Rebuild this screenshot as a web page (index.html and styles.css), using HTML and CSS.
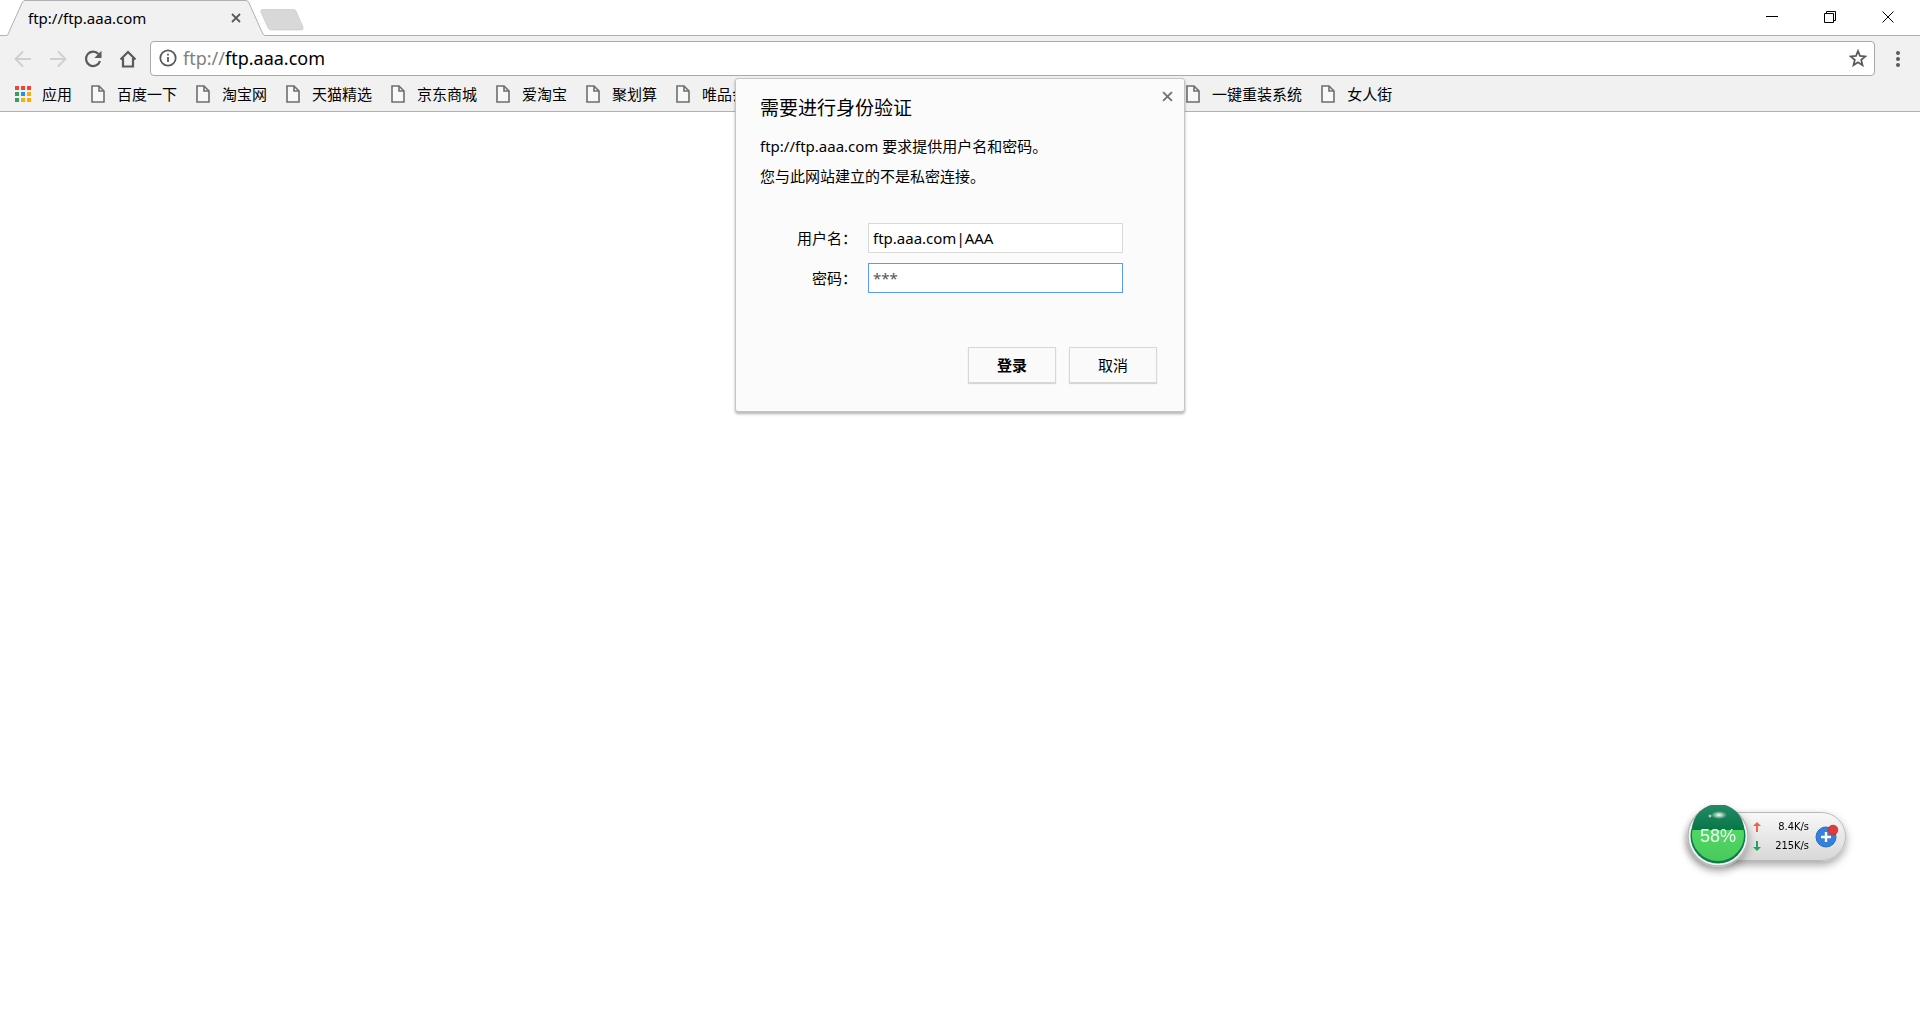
FILE: index.html
```html
<!DOCTYPE html>
<html lang="zh-CN">
<head>
<meta charset="utf-8">
<meta name="viewport" content="width=device-width, initial-scale=1">
<title>ftp://ftp.aaa.com</title>
<link rel="stylesheet" href="styles.css">
</head>
<body>
<svg class="sprite" aria-hidden="true">
  <symbol id="page" viewBox="0 0 14 18"><path d="M1 1h7l5 5v11H1z" fill="#f8f8f8" stroke="#6e6e6e" stroke-width="1.6"/><path d="M8 1v5h5" fill="none" stroke="#6e6e6e" stroke-width="1.6"/></symbol>
  <symbol id="cross" viewBox="0 0 10 10"><path d="M1 1l8 8M9 1l-8 8" fill="none" stroke="currentColor" stroke-width="1.8"/></symbol>
</svg>
<header class="browser">
  <div class="tabstrip">
    <div class="tab">
      <svg class="tab-shape" viewBox="0 0 258 36" aria-hidden="true"><path d="M0 35.5C1 35 1 34 2 32L15 3Q16.300 .5 18 .5H239Q241 .5 242 3L255 32Q256 35 258 35.500V36H0z" fill="#f1f1f1"/><path d="M0 35.500C1 35 1 34 2 32L15 3Q16.300 .5 18 .5H239Q241 .5 242 3L255 32Q256 35 258 35.500" fill="none" stroke="#b0b0b0"/></svg>
      <span class="tab-title">ftp://ftp.aaa.com</span>
      <button class="tab-close" aria-label="关闭标签页"><svg width="10" height="10"><use href="#cross"/></svg></button>
    </div>
    <button class="new-tab" aria-label="新标签页"><svg width="44" height="22" viewBox="0 0 44 22"><path d="M3 .5H33Q35 .5 36 2L43 18Q44 21 41 21H12Q9 21 8 19L1 3Q0 .5 3 .5z" fill="#d8d8d8" stroke="#cacaca" stroke-width=".7"/></svg></button>
    <div class="window-buttons">
      <button aria-label="最小化"><svg width="12" height="12"><path d="M0 5.500h12" stroke="#000"/></svg></button>
      <button aria-label="还原"><svg width="12" height="12"><path d="M.5 2.500h9v9h-9zM2.500 2.500v-2h9v9h-2" fill="none" stroke="#000"/></svg></button>
      <button aria-label="关闭"><svg width="12" height="12"><path d="M.5 .5l11 11M11.500 .5l-11 11" stroke="#000"/></svg></button>
    </div>
  </div>
  <div class="toolbar">
    <nav class="nav">
      <button aria-label="后退" disabled><svg width="18" height="18"><path d="M17 9H2M9 1.500L1.500 9 9 16.500" fill="none" stroke="#cfcfcf" stroke-width="1.900"/></svg></button>
      <button aria-label="前进" disabled><svg width="18" height="18"><path d="M1 9h15M9 1.500L16.500 9 9 16.500" fill="none" stroke="#cfcfcf" stroke-width="1.900"/></svg></button>
      <button aria-label="重新加载"><svg width="18" height="18"><path d="M14.500 4A7.200 7.200 0 1 0 16 11.200" fill="none" stroke="#5a5a5a" stroke-width="2.200"/><path d="M17.500 .8V8h-7.200z" fill="#5a5a5a"/></svg></button>
      <button aria-label="主页"><svg width="18" height="18"><path d="M1.500 9.500L9 2l7.500 7.500M4 8v8.500h10V8" fill="none" stroke="#5a5a5a" stroke-width="2.200"/></svg></button>
    </nav>
    <div class="omnibox">
      <button class="info" aria-label="网站信息"><svg width="18" height="18"><circle cx="9" cy="9" r="7.700" fill="none" stroke="#5a5a5a" stroke-width="1.800"/><path d="M9 8v5M9 4.800v1.800" stroke="#5a5a5a" stroke-width="1.800"/></svg></button>
      <span class="url"><span class="scheme">ftp://</span>ftp.aaa.com</span>
      <button class="star" aria-label="收藏"><svg width="18" height="18"><path d="M9 2l2 5 5.300.4-4.100 3.500 1.300 5.300L9 13.300l-4.500 2.900 1.300-5.300L1.700 7.400 7 7z" fill="none" stroke="#5a5a5a" stroke-width="1.800"/></svg></button>
    </div>
    <button class="menu" aria-label="菜单"><svg width="4" height="18"><path d="M0 3a2 2 0 1 1 4 0a2 2 0 1 1-4 0M0 9a2 2 0 1 1 4 0a2 2 0 1 1-4 0M0 15a2 2 0 1 1 4 0a2 2 0 1 1-4 0" fill="#5a5a5a"/></svg></button>
  </div>
  <nav class="bookmarks">
    <a class="apps" href="#"><svg width="16" height="16"><path d="M0 0h4v4H0zM6 0h4v4H6zM12 0h4v4h-4z" fill="#f44336"/><path d="M0 6h4v4H0zM0 12h4v4H0z" fill="#34a060"/><path d="M6 6h4v4H6z" fill="#2a8cf0"/><path d="M12 6h4v4h-4zM6 12h4v4H6zM12 12h4v4h-4z" fill="#fbab07"/></svg>应用</a>
    <a href="#"><svg width="14" height="18"><use href="#page"/></svg>百度一下</a>
    <a href="#"><svg width="14" height="18"><use href="#page"/></svg>淘宝网</a>
    <a href="#"><svg width="14" height="18"><use href="#page"/></svg>天猫精选</a>
    <a href="#"><svg width="14" height="18"><use href="#page"/></svg>京东商城</a>
    <a href="#"><svg width="14" height="18"><use href="#page"/></svg>爱淘宝</a>
    <a href="#"><svg width="14" height="18"><use href="#page"/></svg>聚划算</a>
    <a class="wide" href="#"><svg width="14" height="18"><use href="#page"/></svg>唯品会</a>
    <a href="#"><svg width="14" height="18"><use href="#page"/></svg>一键重装系统</a>
    <a href="#"><svg width="14" height="18"><use href="#page"/></svg>女人街</a>
  </nav>
</header>

<form class="dialog" role="dialog" aria-labelledby="dialog-title">
  <button type="button" class="dialog-close" aria-label="关闭"><svg width="11" height="11"><use href="#cross"/></svg></button>
  <h1 id="dialog-title">需要进行身份验证</h1>
  <p>ftp://ftp.aaa.com 要求提供用户名和密码。</p>
  <p>您与此网站建立的不是私密连接。</p>
  <div class="fields">
    <label for="user">用户名：</label><input id="user" type="text" value="ftp.aaa.com|AAA">
    <label for="pass">密码：</label><input id="pass" class="active" type="text" value="***" autocomplete="off">
  </div>
  <div class="actions">
    <button type="button" class="primary">登录</button>
    <button type="button">取消</button>
  </div>
</form>

<aside class="monitor">
  <div class="gauge">
    <svg class="gauge-ball" viewBox="0 0 62 62" aria-hidden="true">
      <defs>
        <linearGradient id="dark" x1="0" y1="0" x2="0" y2="1"><stop offset="0" stop-color="#258b68"/><stop offset="1" stop-color="#087647"/></linearGradient>
        <linearGradient id="green" x1="0" y1="0" x2="0" y2="1"><stop offset="0" stop-color="#4fd866"/><stop offset="1" stop-color="#4bc95c"/></linearGradient>
        <radialGradient id="shine"><stop offset="0" stop-color="#fff"/><stop offset="1" stop-color="#fff" stop-opacity="0"/></radialGradient>
      </defs>
      <circle cx="31" cy="31" r="30" fill="#f4f4f4" stroke="#b8b8b8" stroke-width="1.500"/>
      <circle cx="31" cy="31" r="27.500" fill="#0b7d4b"/>
      <path d="M5 25a26 26 0 0 1 52 0z" fill="url(#dark)"/>
      <path d="M5.500 25h51A26 26 0 1 1 5.500 25z" fill="url(#green)"/>
      <ellipse cx="32" cy="10" rx="8" ry="4" fill="url(#shine)"/>
      <circle cx="23" cy="11" r="2" fill="url(#shine)"/>
    </svg>
    <span>58%</span>
  </div>
  <div class="rates">
    <div><svg width="8" height="10"><path d="M4 0l4 4H5v6H3V4H0z" fill="#ef6548"/></svg><span>8.4K/s</span></div>
    <div><svg width="8" height="10"><path d="M4 10L0 6h3V0h2v6h3z" fill="#27a35a"/></svg><span>215K/s</span></div>
  </div>
  <button class="boost" aria-label="加速"><svg width="24" height="24"><circle cx="11" cy="13" r="10" fill="#3580dc" stroke="#266bc4"/><path d="M11 8v10M6 13h10" stroke="#fff" stroke-width="2.400"/><circle cx="18" cy="6" r="4.800" fill="#e03c3c" stroke="#b92b2b" stroke-width=".8"/></svg></button>
</aside>
</body>
</html>
```
FILE: styles.css
```css
* { box-sizing: border-box; }

body {
  margin: 0;
  min-height: 100vh;
  background: #fff;
  color: #000;
  font: 15px/20px "Noto Sans", "Noto Sans CJK SC", sans-serif;
}

button {
  display: flex;
  align-items: center;
  justify-content: center;
  padding: 0;
  border: 0;
  background: none;
  color: inherit;
  font: inherit;
}

svg { display: block; flex: none; }
.sprite { position: absolute; width: 0; height: 0; }

.browser {
  background: #f1f1f1;
  border-bottom: 1px solid #b0b0b0;
}

/* Tab strip */
.tabstrip {
  display: flex;
  height: 36px;
  padding: 0 3px 0 7px;
  background: #fff;
  box-shadow: inset 0 -1px #b0b0b0;
}
.tab {
  position: relative;
  display: flex;
  align-items: center;
  justify-content: space-between;
  width: 258px;
  padding: 0 24px 0 21px;
}
.tab-shape { position: absolute; left: 0; top: 0; width: 258px; height: 36px; }
.tab-title { position: relative; }
.tab-close { position: relative; color: #5a5a5a; }
.new-tab { margin: 4px auto 0 -5px; }
.window-buttons { display: flex; height: 34px; }
.window-buttons button { width: 58px; }

/* Toolbar */
.toolbar {
  display: flex;
  align-items: center;
  gap: 13px;
  padding: 5px 20px 5px 14px;
}
.nav { display: flex; gap: 17px; }
.omnibox {
  display: flex;
  align-items: center;
  flex: 1;
  height: 35px;
  margin-right: 8px;
  padding: 0 7px 2px 8px;
  background: #fff;
  border: 1px solid #a8a8a8;
  border-radius: 4px;
}
.url { flex: 1; margin-left: 6px; font-size: 18px; }
.scheme { color: #808080; }

/* Bookmarks */
.bookmarks {
  display: flex;
  height: 30px;
  padding: 0 14px 4px 15px;
  gap: 19px;
  overflow: hidden;
}
.bookmarks a {
  display: flex;
  align-items: center;
  flex: none;
  gap: 12px;
  color: #000;
  text-decoration: none;
  white-space: nowrap;
}
.bookmarks .apps { gap: 11px; }
.bookmarks .wide { width: 491px; }

/* Sign-in dialog */
.dialog {
  position: absolute;
  top: 78px;
  left: calc(50% - 225px);
  width: 450px;
  padding: 18px 27px 28px 24px;
  background: #fbfbfb;
  border: 1px solid #c4c4c4;
  border-radius: 3px;
  box-shadow: 0 2px 3px rgba(0, 0, 0, .3);
}
.dialog-close { position: absolute; top: 12px; right: 11px; color: #757575; }
.dialog h1 { margin: 0 0 17px; font-size: 19px; line-height: 22px; font-weight: 400; }
.dialog p { margin: 0 0 10px; }
.fields {
  display: grid;
  grid-template-columns: 97px 255px;
  gap: 10px 11px;
  align-items: center;
  padding-top: 27px;
}
.fields label { text-align: right; white-space: nowrap; }
.fields input {
  height: 30px;
  padding: 0 4px;
  border: 1px solid #d9d9d9;
  background: #fff;
  font: inherit;
  color: #000;
  outline: 0;
}
.fields .active { border-color: #5b9bf8; color: #555; }
.actions { display: flex; justify-content: flex-end; gap: 13px; margin-top: 54px; }
.actions button {
  width: 88px;
  height: 36px;
  border: 1px solid #d8d8d8;
  background: #fafafa;
  box-shadow: 0 1px 1px rgba(0, 0, 0, .15);
}
.actions .primary { font-weight: 700; }

/* Floating speed monitor */
.monitor {
  position: fixed;
  right: 74px;
  top: 812px;
  display: flex;
  align-items: center;
  width: 158px;
  height: 49px;
  padding: 0 6px 2px 0;
  background: linear-gradient(#f8f8f8, #d8d8d8);
  border: 1px solid #b8b8b8;
  border-radius: 25px;
  box-shadow: 0 4px 9px rgba(0, 0, 0, .35);
}
.gauge {
  position: relative;
  flex: none;
  display: grid;
  place-items: center;
  width: 62px;
  height: 62px;
  margin-left: -2px;
  border-radius: 50%;
  box-shadow: 0 4px 8px rgba(0, 0, 0, .3);
}
.gauge-ball { position: absolute; inset: 0; width: 62px; height: 62px; }
.gauge span {
  position: relative;
  color: #f0fff0;
  font: 18px/20px "Liberation Sans", sans-serif;
}
.rates {
  flex: 1;
  display: grid;
  gap: 3px;
  padding: 2px 6px 0 4px;
  font: 11px/16px "DejaVu Sans Condensed", "DejaVu Sans", sans-serif;
}
.rates div { display: flex; align-items: center; justify-content: space-between; }
```
